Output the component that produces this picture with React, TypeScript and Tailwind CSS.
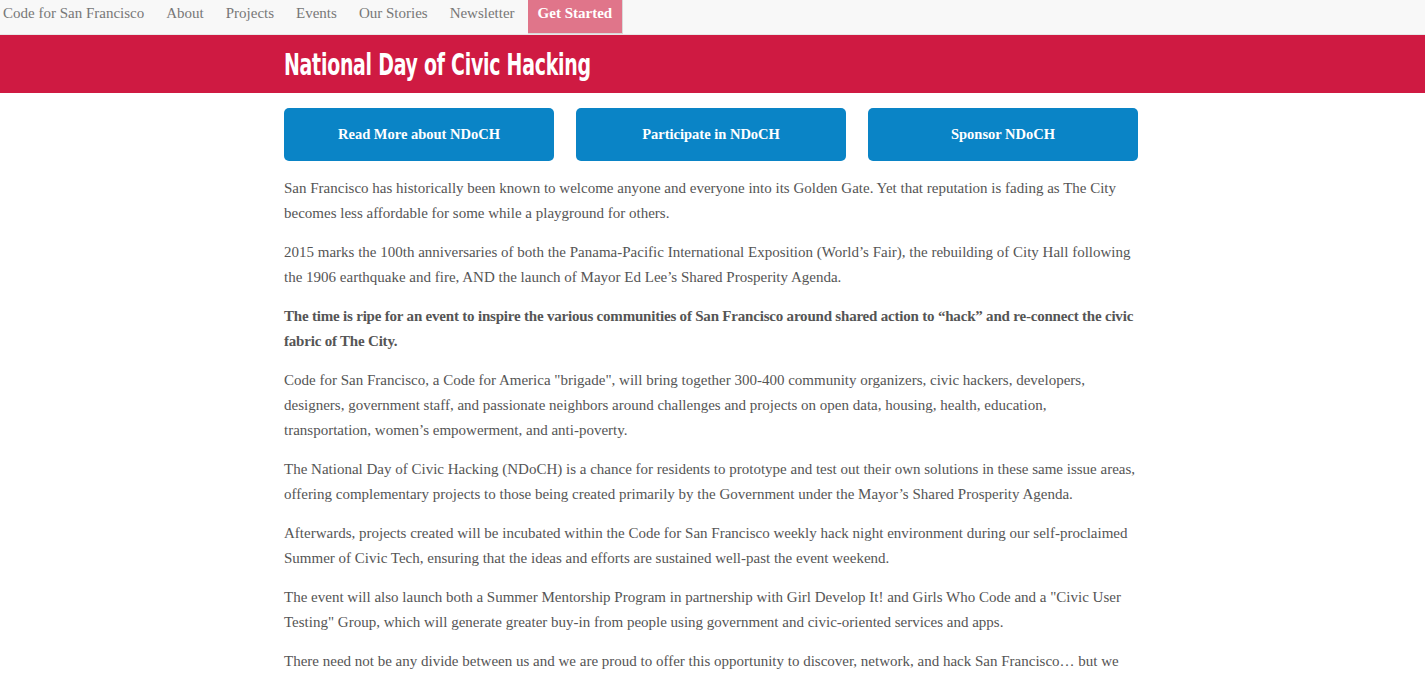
export default function App() {
  const body = { fontFamily: '"Liberation Serif", "DejaVu Serif", serif' };

  return (
    <div className="min-h-[680px] bg-white" style={body}>
      {/* Top nav */}
      <nav className="h-[35px] bg-[#f8f8f8] border-b border-[#e7e7e7] flex items-start text-[15px] leading-[17px] text-[#777]">
        <a className="pl-[3px] pr-[22px] pt-[5px]">Code for San Francisco</a>
        <a className="pr-[22px] pt-[5px]">About</a>
        <a className="pr-[22px] pt-[5px]">Projects</a>
        <a className="pr-[22px] pt-[5px]">Events</a>
        <a className="pr-[22px] pt-[5px]">Our Stories</a>
        <a className="pr-[13px] pt-[5px]">Newsletter</a>
        <a className="px-[10px] pt-[5px] h-[34px] bg-[#e0758a] text-white font-bold border-r border-b border-[#d9d9d9]">
          Get Started
        </a>
      </nav>

      {/* Title banner */}
      <header className="h-[58px] bg-[#cf1a42] flex items-center">
        <div className="mx-auto w-[857px] pr-[3px]">
          <h1
            className="text-white text-[31px] font-bold tracking-[-0.4px] leading-none origin-left scale-x-[0.61] whitespace-nowrap"
            style={{ fontFamily: '"DejaVu Sans", sans-serif' }}
          >
            National Day of Civic Hacking
          </h1>
        </div>
      </header>

      <main className="mx-auto w-[857px] pr-[3px] pt-[15px] text-[#555] text-[15px] leading-[25px]">
        <div className="grid grid-cols-3 gap-[22px] mb-[15px] text-[14.5px]">
          <a className="h-[53px] rounded-[5px] bg-[#0a84c6] text-white font-bold flex items-center justify-center">
            Read More about NDoCH
          </a>
          <a className="h-[53px] rounded-[5px] bg-[#0a84c6] text-white font-bold flex items-center justify-center">
            Participate in NDoCH
          </a>
          <a className="h-[53px] rounded-[5px] bg-[#0a84c6] text-white font-bold flex items-center justify-center">
            Sponsor NDoCH
          </a>
        </div>

        <div className="flex flex-col gap-[14px] whitespace-nowrap">
          <p>
            San Francisco has historically been known to welcome anyone and everyone into its Golden Gate. Yet that reputation is fading as The City
            <br />
            becomes less affordable for some while a playground for others.
          </p>
          <p>
            2015 marks the 100th anniversaries of both the Panama-Pacific International Exposition (World’s Fair), the rebuilding of City Hall following
            <br />
            the 1906 earthquake and fire, AND the launch of Mayor Ed Lee’s Shared Prosperity Agenda.
          </p>
          <p className="font-bold tracking-[-0.2px]">
            The time is ripe for an event to inspire the various communities of San Francisco around shared action to “hack” and re-connect the civic
            <br />
            fabric of The City.
          </p>
          <p>
            Code for San Francisco, a Code for America "brigade", will bring together 300-400 community organizers, civic hackers, developers,
            <br />
            designers, government staff, and passionate neighbors around challenges and projects on open data, housing, health, education,
            <br />
            transportation, women’s empowerment, and anti-poverty.
          </p>
          <p>
            The National Day of Civic Hacking (NDoCH) is a chance for residents to prototype and test out their own solutions in these same issue areas,
            <br />
            offering complementary projects to those being created primarily by the Government under the Mayor’s Shared Prosperity Agenda.
          </p>
          <p>
            Afterwards, projects created will be incubated within the Code for San Francisco weekly hack night environment during our self-proclaimed
            <br />
            Summer of Civic Tech, ensuring that the ideas and efforts are sustained well-past the event weekend.
          </p>
          <p>
            The event will also launch both a Summer Mentorship Program in partnership with Girl Develop It! and Girls Who Code and a "Civic User
            <br />
            Testing" Group, which will generate greater buy-in from people using government and civic-oriented services and apps.
          </p>
          <p>
            There need not be any divide between us and we are proud to offer this opportunity to discover, network, and hack San Francisco… but we
            <br />
            need your help to make it happen.
          </p>
        </div>
      </main>
    </div>
  );
}
